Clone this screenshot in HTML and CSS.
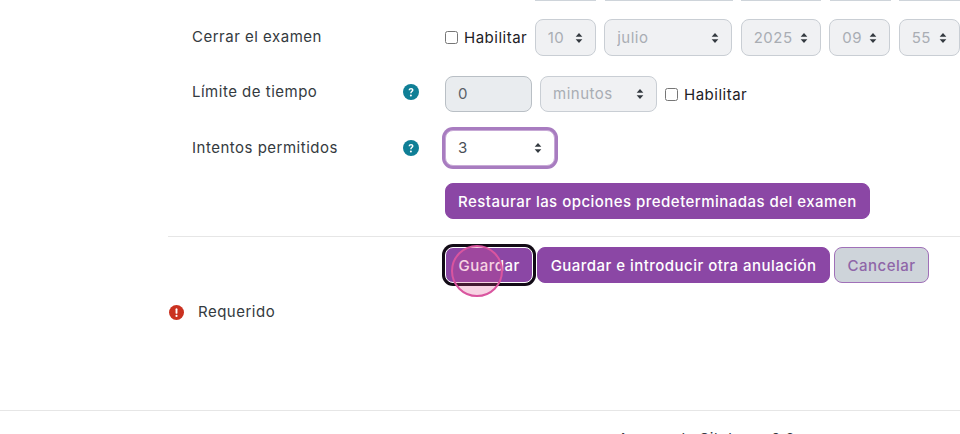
FILE: index.html
```html
<!DOCTYPE html>
<html lang="es">
<head>
<meta charset="utf-8">
<title>Anulación de examen</title>
<link rel="stylesheet" href="styles.css">
</head>
<body>
<main class="main">
  <div class="sliver">
    <span class="sl w61"></span><span class="sl w128"></span><span class="sl w80"></span><span class="sl w61"></span><span class="sl w61"></span>
  </div>
  <div class="row row-close">
    <div class="label">Cerrar el examen</div>
    <div class="controls">
      <label class="check"><input type="checkbox"><span>Habilitar</span></label>
      <select class="sel w61" disabled><option>10</option></select>
      <select class="sel w128" disabled><option>julio</option></select>
      <select class="sel w80" disabled><option>2025</option></select>
      <select class="sel w61" disabled><option>09</option></select>
      <select class="sel w61" disabled><option>55</option></select>
    </div>
  </div>
  <div class="row row-limit">
    <div class="label">Límite de tiempo<svg class="help" viewBox="0 0 16 16"><circle cx="8" cy="8" r="8" fill="#0f7f96"/><path d="M5.6 6.2c0-1.4 1.1-2.3 2.5-2.3 1.3 0 2.4.9 2.4 2.1 0 1.8-1.9 1.8-1.9 3.2H7.2c0-2.1 1.7-2 1.7-3.1 0-.5-.4-.8-.9-.8-.5 0-.9.4-.9 1z" fill="#fff"/><circle cx="7.9" cy="11.5" r="1" fill="#fff"/></svg></div>
    <div class="controls limit-controls">
      <input class="num" value="0" disabled>
      <select class="sel w117" disabled><option>minutos</option></select>
      <label class="check"><input type="checkbox"><span>Habilitar</span></label>
    </div>
  </div>
  <div class="row row-attempts">
    <div class="label">Intentos permitidos<svg class="help" viewBox="0 0 16 16"><circle cx="8" cy="8" r="8" fill="#0f7f96"/><path d="M5.6 6.2c0-1.4 1.1-2.3 2.5-2.3 1.3 0 2.4.9 2.4 2.1 0 1.8-1.9 1.8-1.9 3.2H7.2c0-2.1 1.7-2 1.7-3.1 0-.5-.4-.8-.9-.8-.5 0-.9.4-.9 1z" fill="#fff"/><circle cx="7.9" cy="11.5" r="1" fill="#fff"/></svg></div>
    <div class="controls">
      <select class="sel focus"><option>3</option></select>
    </div>
  </div>
  <div class="row row-restore">
    <div class="label"></div>
    <div class="controls"><button class="btn" type="button">Restaurar las opciones predeterminadas del examen</button></div>
  </div>
  <div class="row row-actions">
    <div class="label"></div>
    <div class="controls actions">
      <button class="btn focused" type="button">Guardar<span class="ripple"></span></button>
      <button class="btn another" type="button">Guardar e introducir otra anulación</button>
      <button class="btn cancel" type="button">Cancelar</button>
    </div>
  </div>
  <div class="required">
    <svg class="req-icon" viewBox="0 0 16 16"><circle cx="8" cy="8" r="8" fill="#ca3120"/><rect x="7" y="3.4" width="2" height="6" rx="1" fill="#fff"/><circle cx="8" cy="11.6" r="1.15" fill="#fff"/></svg>
    <span>Requerido</span>
  </div>
</main>
<footer class="footer"><span>Acerca de Sitelearn 2.0</span></footer>
</body>
</html>
```

FILE: styles.css
```css
* { box-sizing: border-box; }
html, body { margin: 0; height: 434px; overflow: hidden; background: #fff; }
body { font-family: Inter, "Noto Sans", sans-serif; font-size: 15px; color: #1d2125; letter-spacing: .5px; }
.main { margin-left: 168px; height: 410px; }
.sliver { display: flex; gap: 8.5px; height: 1px; margin-left: 367px; }
.sl { display: block; height: 1px; background: #ced4da; flex: none; }
.sl.w61 { width: 61px; }
.sl.w128 { width: 128px; }
.sl.w80 { width: 80px; }
.row { display: grid; grid-template-columns: 277px 1fr; }
.label { padding-left: 24px; position: relative; color: #343a40; line-height: 22px; }
.help { position: absolute; left: 235px; width: 16px; height: 16px; }
.controls { display: flex; align-items: center; gap: 8.5px; }
.limit-controls { gap: 8px; }
.row-close { margin-top: 18px; height: 37px; }
.row-close .label { padding-top: 7px; }
.row-limit { margin-top: 20px; height: 36px; }
.row-limit .label { padding-top: 5px; }
.row-limit .help { top: 8px; }
.row-attempts { margin-top: 18px; height: 36px; }
.row-attempts .label { padding-top: 7px; }
.row-attempts .help { top: 10px; }
.row-restore { margin-top: 17px; height: 36px; }
.row-actions { margin-top: 17px; padding-top: 10px; border-top: 1px solid #e6e6e6; height: 47px; }
.actions { gap: 4px; align-items: flex-start; }
.sel { appearance: none; -webkit-appearance: none; height: 37px; padding: 0 24px 0 12px; border: 1px solid #ced4da; border-radius: 8px; background-color: #fff; color: #495057; font: inherit; letter-spacing: .5px;
  background-image: url("data:image/svg+xml,%3Csvg xmlns='http://www.w3.org/2000/svg' viewBox='0 0 8 12'%3E%3Cpath d='M4 0 8 4.5H0zM4 12 0 7.500H8z' fill='%23343a40'/%3E%3C/svg%3E");
  background-repeat: no-repeat; background-position: right 12px center; background-size: 8px 10px; flex: none; }
.sel:disabled { background-color: #f0f1f3; color: #a9adb3; opacity: 1; border-color: #c9ced4; }
.sel.w61 { width: 61px; }
.sel.w128 { width: 128px; }
.sel.w80 { width: 80px; }
.sel.w117 { width: 117px; height: 36px; padding-bottom: 2px; }
.sel.focus { width: 110px; height: 36px; padding-bottom: 2px; border-color: #c7a9d6; box-shadow: 0 0 0 3px #a87cc0; }
.num { width: 87px; height: 36px; padding: 0 12px 2px; border: 1px solid #b9bfc5; border-radius: 8px; background: #e9ecef; color: #5a6168; font: inherit; }
.check { display: flex; align-items: center; gap: 6px; color: #1d2125; margin-right: -1px; }
.check input { width: 13px; height: 13px; margin: 0; flex: none; }
.btn { position: relative; height: 36px; padding: 0 12px; border: 1px solid #8b47a5; border-radius: 8px; background: #8b47a5; color: #fff; font: 500 15px Inter, "Noto Sans", sans-serif; letter-spacing: .47px; white-space: nowrap; }
.cancel { padding: 0 12.5px; background: #ced4da; border-color: #a070b8; color: #8f66a8; }
.another { padding: 0 12.5px; }
.focused { padding: 0 12.5px; box-shadow: 0 0 0 3px #120b16; border-color: #fff; }
.ripple { position: absolute; left: 5px; top: -3px; width: 52px; height: 52px; border-radius: 50%; border: 2px solid #d9559f; background: rgba(220, 70, 140, .24); }
.required { display: flex; align-items: center; gap: 14px; margin: 18px 0 0 1px; line-height: 22px; color: #343a40; }
.req-icon { width: 15px; height: 15px; flex: none; }
.footer { height: 24px; border-top: 1px solid #e6e6e6; padding-top: 18px; padding-left: 618px; color: #343a40; white-space: nowrap; }
```
